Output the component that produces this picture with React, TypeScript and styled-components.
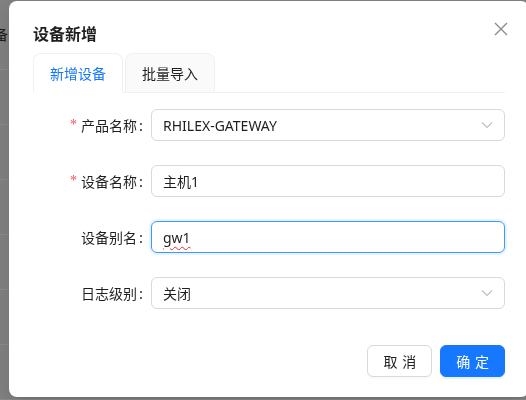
import styled, { createGlobalStyle } from "styled-components";

const GlobalStyle = createGlobalStyle`
  html, body {
    margin: 0;
    padding: 0;
    width: 526px;
    height: 400px;
    overflow: hidden;
  }
  body {
    font-family: "Noto Sans", "Noto Sans CJK SC", sans-serif;
    font-size: 14px;
    color: rgba(0, 0, 0, 0.88);
  }
  * {
    box-sizing: border-box;
  }
`;

const fields = [
  { label: "产品名称", value: "RHILEX-GATEWAY", required: true, kind: "select" },
  { label: "设备名称", value: "主机1", required: true, kind: "input" },
  { label: "设备别名", value: "gw1", required: false, kind: "focused" },
  { label: "日志级别", value: "关闭", required: false, kind: "select" },
];

const App = () => {
  return (
    <>
      <GlobalStyle />
      <Page>
        <PageHeader>
          <PageTitle>设备</PageTitle>
        </PageHeader>
        {[0, 1, 2, 3, 4, 5].map((i) => (
          <TableRow key={i} />
        ))}
      </Page>
      <Mask />
      <Modal>
        <CloseButton aria-label="close">
          <svg width="14" height="14" viewBox="0 0 14 14">
            <path d="M1 1 L13 13 M13 1 L1 13" stroke="#8c8c8c" strokeWidth="1.4" fill="none" />
          </svg>
        </CloseButton>
        <Title>设备新增</Title>
        <TabNav>
          <Tab active>新增设备</Tab>
          <Tab>批量导入</Tab>
        </TabNav>
        <Form>
          {fields.map((f) => (
            <FormRow key={f.label}>
              <Label>
                {f.required && <Star>*</Star>}
                {f.label}
                <Colon>:</Colon>
              </Label>
              <Field focused={f.kind === "focused"}>
                {f.kind === "focused" ? <Misspelled>{f.value}</Misspelled> : <span>{f.value}</span>}
                {f.kind === "select" && (
                  <Arrow width="12" height="8" viewBox="0 0 12 8">
                    <path d="M1 1.5 L6 6.5 L11 1.5" stroke="#bfbfbf" strokeWidth="1.1" fill="none" />
                  </Arrow>
                )}
              </Field>
            </FormRow>
          ))}
        </Form>
        <Footer>
          <Button>
            <span>取消</span>
          </Button>
          <Button primary>
            <span>确定</span>
          </Button>
        </Footer>
      </Modal>
    </>
  );
};

export default App;

const Page = styled.div`
  width: 526px;
  height: 400px;
  background: #ebebeb;
  display: flex;
  flex-direction: column;
`;

const PageHeader = styled.div`
  height: 88px;
  padding-top: 24px;
  border-bottom: 1px solid #ffffff;
`;

const PageTitle = styled.span`
  display: inline-block;
  margin-left: -20px;
  font-family: "Noto Sans CJK SC", sans-serif;
  font-size: 14px;
  color: #333;
`;

const TableRow = styled.div`
  height: 55px;
  flex-shrink: 0;
  border-bottom: 1px solid #ffffff;
`;

const Mask = styled.div`
  position: fixed;
  inset: 0;
  background: rgba(0, 0, 0, 0.45);
`;

const Modal = styled.div`
  position: fixed;
  top: 1px;
  left: 9px;
  width: 520px;
  background: #ffffff;
  border-radius: 8px;
  padding: 20px 24px;
  box-shadow: 0 6px 16px 0 rgba(0, 0, 0, 0.08), 0 3px 6px -4px rgba(0, 0, 0, 0.12),
    0 9px 28px 8px rgba(0, 0, 0, 0.05);
`;

const CloseButton = styled.button`
  position: absolute;
  top: 17px;
  right: 17px;
  width: 22px;
  height: 22px;
  padding: 0;
  border: none;
  background: transparent;
  display: flex;
  align-items: center;
  justify-content: center;
`;

const Title = styled.div`
  font-family: "Noto Sans CJK SC", sans-serif;
  font-size: 16px;
  font-weight: 600;
  line-height: 24px;
  margin-bottom: 8px;
  color: rgba(0, 0, 0, 0.88);
`;

const TabNav = styled.div`
  display: flex;
  gap: 2px;
  border-bottom: 1px solid #f0f0f0;
  margin-bottom: 16px;
`;

const Tab = styled.div<{ active?: boolean }>`
  height: 40px;
  padding: 8px 16px;
  font-family: "Noto Sans CJK SC", sans-serif;
  line-height: 22px;
  border: 1px solid #f0f0f0;
  border-bottom-color: ${(p) => (p.active ? "#ffffff" : "#f0f0f0")};
  margin-bottom: -1px;
  border-radius: 8px 8px 0 0;
  background: ${(p) => (p.active ? "#ffffff" : "#fafafa")};
  color: ${(p) => (p.active ? "#1677ff" : "rgba(0, 0, 0, 0.88)")};
`;

const Form = styled.div`
  display: flex;
  flex-direction: column;
`;

const FormRow = styled.div`
  display: grid;
  grid-template-columns: 118px 1fr;
  align-items: center;
  margin-bottom: 24px;
`;

const Label = styled.label`
  display: flex;
  justify-content: flex-end;
  align-items: center;
  font-family: "Noto Sans CJK SC", sans-serif;
  line-height: 32px;
  color: rgba(0, 0, 0, 0.88);
`;

const Star = styled.span`
  color: #ff4d4f;
  font-family: "Liberation Serif", serif;
  font-size: 14px;
  margin-right: 4px;
`;

const Colon = styled.span`
  margin: 0 8px 0 2px;
`;

const Field = styled.div<{ focused?: boolean }>`
  height: 32px;
  display: flex;
  align-items: center;
  justify-content: space-between;
  padding: 4px 11px;
  border: 1px solid ${(p) => (p.focused ? "#4096ff" : "#d9d9d9")};
  border-radius: 6px;
  box-shadow: ${(p) => (p.focused ? "0 0 0 2px rgba(5, 145, 255, 0.1)" : "none")};
  font-family: "Noto Sans", "Noto Sans CJK SC", sans-serif;
  font-size: 14px;
  color: rgba(0, 0, 0, 0.88);
`;

const Misspelled = styled.span`
  text-decoration: underline wavy #e0302e;
  text-decoration-thickness: 1px;
  text-underline-offset: 3px;
`;

const Arrow = styled.svg`
  flex-shrink: 0;
`;

const Footer = styled.div`
  display: flex;
  justify-content: flex-end;
  gap: 8px;
  margin-top: 12px;
`;

const Button = styled.button<{ primary?: boolean }>`
  height: 32px;
  padding: 4px 15px;
  display: inline-flex;
  align-items: center;
  justify-content: center;
  white-space: nowrap;
  border-radius: 6px;
  font-family: "Noto Sans CJK SC", sans-serif;
  font-size: 14px;
  border: 1px solid ${(p) => (p.primary ? "#1677ff" : "#d9d9d9")};
  background: ${(p) => (p.primary ? "#1677ff" : "#ffffff")};
  color: ${(p) => (p.primary ? "#ffffff" : "rgba(0, 0, 0, 0.88)")};
  box-shadow: ${(p) => (p.primary ? "0 2px 0 rgba(5, 145, 255, 0.1)" : "0 2px 0 rgba(0, 0, 0, 0.02)")};
  & > span {
    letter-spacing: 0.34em;
    margin-right: -0.34em;
  }
`;
